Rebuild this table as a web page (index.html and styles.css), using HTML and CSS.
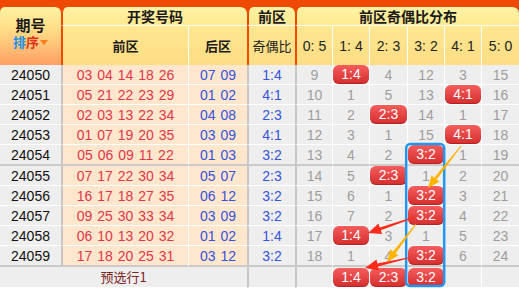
FILE: index.html
```html
<!DOCTYPE html>
<html lang="zh">
<head>
<meta charset="utf-8">
<title>前区奇偶比分布</title>
<link rel="stylesheet" href="styles.css">
</head>
<body>
<div class="board">
  <table class="grid">
    <colgroup>
      <col class="w-no"><col class="w-fr"><col class="w-bk"><col class="w-rt">
      <col class="w-d"><col class="w-d"><col class="w-d2"><col class="w-d"><col class="w-d"><col class="w-d2">
    </colgroup>
    <thead>
      <tr class="h1">
        <th rowspan="2" class="qh">
          <div class="qh-t">期号</div>
          <div class="sort"><span class="sb">排</span><span class="sr">序</span><i class="tri"></i></div>
        </th>
        <th colspan="2" class="gs">开奖号码</th>
        <th class="gs">前区</th>
        <th colspan="6" class="gs">前区奇偶比分布</th>
      </tr>
      <tr class="h2">
        <th class="gs">前区</th>
        <th class="sub">后区</th>
        <th class="gs n">奇偶比</th>
        <th class="gs n num">0: 5</th>
        <th class="sub n num">1: 4</th>
        <th class="sub n num">2: 3</th>
        <th class="sub n num">3: 2</th>
        <th class="sub n num">4: 1</th>
        <th class="sub n num">5: 0</th>
      </tr>
    </thead>
    <tbody>
      <tr><td class="no">24050</td><td class="fr">03 04 14 18 26</td><td class="bk">07 09</td><td class="rt">1:4</td><td class="d d0">9</td><td class="d"><span class="ball">1:4</span></td><td class="d">4</td><td class="d">12</td><td class="d">3</td><td class="d">15</td></tr>
      <tr><td class="no">24051</td><td class="fr">05 21 22 23 29</td><td class="bk">01 02</td><td class="rt">4:1</td><td class="d d0">10</td><td class="d">1</td><td class="d">5</td><td class="d">13</td><td class="d"><span class="ball">4:1</span></td><td class="d">16</td></tr>
      <tr><td class="no">24052</td><td class="fr">02 03 13 22 34</td><td class="bk">04 08</td><td class="rt">2:3</td><td class="d d0">11</td><td class="d">2</td><td class="d"><span class="ball">2:3</span></td><td class="d">14</td><td class="d">1</td><td class="d">17</td></tr>
      <tr><td class="no">24053</td><td class="fr">01 07 19 20 35</td><td class="bk">03 09</td><td class="rt">4:1</td><td class="d d0">12</td><td class="d">3</td><td class="d">1</td><td class="d">15</td><td class="d"><span class="ball">4:1</span></td><td class="d">18</td></tr>
      <tr class="sep"><td class="no">24054</td><td class="fr">05 06 09 11 22</td><td class="bk">01 03</td><td class="rt">3:2</td><td class="d d0">13</td><td class="d">4</td><td class="d">2</td><td class="d"><span class="ball">3:2</span></td><td class="d">1</td><td class="d">19</td></tr>
      <tr><td class="no">24055</td><td class="fr">07 17 22 30 34</td><td class="bk">05 07</td><td class="rt">2:3</td><td class="d d0">14</td><td class="d">5</td><td class="d"><span class="ball">2:3</span></td><td class="d">1</td><td class="d">2</td><td class="d">20</td></tr>
      <tr><td class="no">24056</td><td class="fr">16 17 18 27 35</td><td class="bk">06 12</td><td class="rt">3:2</td><td class="d d0">15</td><td class="d">6</td><td class="d">1</td><td class="d"><span class="ball">3:2</span></td><td class="d">3</td><td class="d">21</td></tr>
      <tr><td class="no">24057</td><td class="fr">09 25 30 33 34</td><td class="bk">03 09</td><td class="rt">3:2</td><td class="d d0">16</td><td class="d">7</td><td class="d">2</td><td class="d"><span class="ball">3:2</span></td><td class="d">4</td><td class="d">22</td></tr>
      <tr><td class="no">24058</td><td class="fr">06 10 13 20 32</td><td class="bk">01 02</td><td class="rt">1:4</td><td class="d d0">17</td><td class="d"><span class="ball">1:4</span></td><td class="d">3</td><td class="d">1</td><td class="d">5</td><td class="d">23</td></tr>
      <tr class="sep"><td class="no">24059</td><td class="fr">17 18 20 25 31</td><td class="bk">03 12</td><td class="rt">3:2</td><td class="d d0">18</td><td class="d">1</td><td class="d">4</td><td class="d"><span class="ball">3:2</span></td><td class="d">6</td><td class="d">24</td></tr>
      <tr class="pre-row"><td colspan="3" class="pre">预选行1</td><td class="rt"></td><td class="d d0"></td><td class="d"><span class="ball">1:4</span></td><td class="d"><span class="ball">2:3</span></td><td class="d"><span class="ball">3:2</span></td><td class="d"></td><td class="d"></td></tr>
    </tbody>
  </table>
  <svg class="overlay" width="519" height="289" viewBox="0 0 519 289" aria-hidden="true">
    <rect x="406.2" y="144" width="38" height="142" rx="4" ry="4" fill="none" stroke="#1e96f2" stroke-width="2.5"/>
    <polygon fill="#ffb400" points="461.4,146.3 436.6,179.5 439.3,181.7 428,188 431.5,175.5 434.2,177.7 460.6,145.7"/>
    <polygon fill="#ffb400" points="416.4,224.3 395.5,253.4 398.3,255.5 387,262 390.3,249.5 393.1,251.6 415.6,223.7"/>
    <polygon fill="#ff2a1a" points="415.2,217.5 380.8,230.2 382.1,234 368,233 378.5,223.6 379.8,227.4 414.8,216.5"/>
    <polygon fill="#ff2a1a" points="408.1,258.5 378,266.5 378.9,270.4 365,268 376.5,259.6 377.4,263.5 407.9,257.5"/>
  </svg>
</div>
</body>
</html>
```
FILE: styles.css
```css
body {
  margin: 0;
  background: #ffffff;
  font-family: "Liberation Sans", "Noto Sans CJK SC", sans-serif;
  font-size: 13px;
}

.board {
  position: relative;
  width: 519px;
}

.grid {
  width: 519px;
  table-layout: fixed;
  border-collapse: separate;
  border-spacing: 0;
  background: #ee4a05;
  padding-top: 7px;
}

.w-no { width: 61px; }
.w-fr { width: 127px; }
.w-bk { width: 59px; }
.w-rt { width: 48px; }
.w-d { width: 37px; }
.w-d2 { width: 38px; }

th {
  padding: 0;
  font-family: "Noto Sans CJK SC", "Liberation Sans", sans-serif;
  font-weight: bold;
  color: #1a1a1a;
  text-align: center;
  vertical-align: middle;
}

.h1 th {
  height: 18px;
  font-size: 14px;
  line-height: 18px;
  background: linear-gradient(#fff3a6, #ffe98f);
  background-clip: padding-box;
  border-radius: 6px 6px 0 0;
}

.h1 th.gs {
  border-left: 2px solid transparent;
}

.h1 th.qh {
  border-radius: 5px 6px 0 0;
  background: linear-gradient(#fff2a2 0%, #ffdf8a 35%, #ffc378 65%, #ffa064 100%);
  padding-bottom: 5px;
  font-family: "Liberation Sans", "Noto Sans CJK SC", sans-serif;
}

.qh-t {
  font-size: 15px;
  line-height: 18px;
}

.sort {
  font-size: 13px;
  line-height: 16px;
}

.sb { color: #1d8fe6; }
.sr { color: #e0321c; }

.tri {
  display: inline-block;
  width: 0;
  height: 0;
  margin-left: 1px;
  vertical-align: 2px;
  border-left: 4px solid transparent;
  border-right: 4px solid transparent;
  border-top: 5px solid #ff7a1e;
}

.h2 th {
  height: 39px;
  font-size: 13px;
  line-height: 18px;
  border-top: 1px solid #ffffff;
  background: linear-gradient(#ffe692, #ffdd84);
  background-clip: padding-box;
}

.h2 th.gs {
  border-left: 2px solid transparent;
}

.h2 th.sub {
  border-left: 1px solid #ffffff;
}

.h2 th.n {
  font-weight: normal;
}

.h2 th.num {
  font-family: "Liberation Sans", sans-serif;
  font-size: 14px;
  color: #222222;
}

tbody tr {
  height: 20px;
}

td {
  padding: 0;
  text-align: center;
  vertical-align: middle;
  line-height: 18px;
  white-space: nowrap;
  background: #efeeee;
  border-bottom: 1px solid #ffffff;
}

tr.sep td {
  border-bottom: 2px solid #ccc9c9;
}

td.no {
  color: #111111;
  font-size: 14px;
}

td.fr {
  background: #ffe6cd;
  color: #e3364a;
  border-left: 2px solid #c9c6c6;
  font-size: 14px;
  word-spacing: 1px;
}

td.bk {
  background: #ffe6cd;
  color: #3553dc;
  border-left: 1px solid #ffffff;
  font-size: 14px;
  word-spacing: 1px;
}

td.rt {
  color: #3553dc;
  border-left: 2px solid #c9c6c6;
  font-size: 14px;
}

td.d {
  color: #9d9d9d;
  border-left: 1px solid #ffffff;
  font-size: 14px;
}

td.d0 {
  border-left: 2px solid #c9c6c6;
}

td.pre {
  font-family: "Noto Sans CJK SC", "Liberation Sans", sans-serif;
  color: #7a2424;
  font-size: 13px;
}

.pre-row {
  height: 21px;
}

.ball {
  display: block;
  height: 19px;
  line-height: 19px;
  border-radius: 6px;
  background: linear-gradient(#f65c5c, #d42e2e);
  box-shadow: inset 0 -1px 0 rgba(140, 0, 0, 0.35);
  color: #ffffff;
  font-size: 14px;
}

.overlay {
  position: absolute;
  left: 0;
  top: 0;
  pointer-events: none;
}
```
